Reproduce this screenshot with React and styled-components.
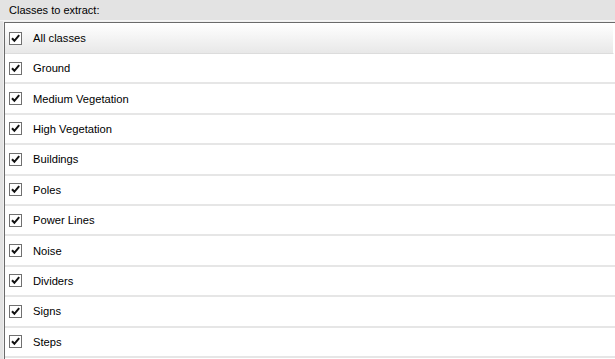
import React from 'react'
import styled, { createGlobalStyle } from 'styled-components'

const classes = [
  'Ground',
  'Medium Vegetation',
  'High Vegetation',
  'Buildings',
  'Poles',
  'Power Lines',
  'Noise',
  'Dividers',
  'Signs',
  'Steps',
]

const Global = createGlobalStyle`
  html, body {
    margin: 0;
    padding: 0;
    background: #e3e3e3;
    overflow: hidden;
  }
  body {
    font-family: "Liberation Sans", Arial, sans-serif;
    font-size: 11px;
    color: #000;
  }
`

const Wrapper = styled.div`
  width: 615px;
  height: 359px;
  display: flex;
  flex-direction: column;
`

const Caption = styled.div`
  height: 20px;
  padding-left: 9px;
  display: flex;
  align-items: center;
  border-bottom: 1px solid #f4f4f4;
`

const Grid = styled.div`
  flex: 1;
  margin-left: 3px;
  background: #fff;
  border-top: 1px solid #f0f0f0;
  border-left: 1px solid #f0f0f0;
  box-shadow: inset 1px 1px 0 #6a6a6a;
  padding: 1px 0 0 1px;
  overflow: hidden;
`

const HeaderRow = styled.div`
  height: 30px;
  display: flex;
  align-items: center;
  gap: 11px;
  padding-left: 4px;
  background: linear-gradient(#ffffff, #e8e8e8);
  border-bottom: 1px solid #dcdcdc;
  border-right: 1px solid #fff;
  margin-right: 1px;
  font-size: 11.2px;
`

const Row = styled.div`
  height: 28.4px;
  display: flex;
  align-items: center;
  gap: 11px;
  padding-left: 4px;
  border-bottom: 2px solid #e6e6e6;
  font-size: 11.2px;
`

const Box = styled.span`
  width: 11px;
  height: 11px;
  border: 1px solid #707070;
  background: #fff;
  display: flex;
  align-items: center;
  justify-content: center;
  flex: none;
`

const Check = () => (
  <Box>
    <svg width="11" height="11" viewBox="0 0 11 11">
      <path d="M2 5.2 L4.4 7.8 L9.2 2.2" fill="none" stroke="#111" strokeWidth="2" />
    </svg>
  </Box>
)

export default function App() {
  return (
    <Wrapper>
      <Global />
      <Caption>Classes to extract:</Caption>
      <Grid>
        <HeaderRow>
          <Check />
          <span>All classes</span>
        </HeaderRow>
        {classes.map(name => (
          <Row key={name}>
            <Check />
            <span>{name}</span>
          </Row>
        ))}
      </Grid>
    </Wrapper>
  )
}
